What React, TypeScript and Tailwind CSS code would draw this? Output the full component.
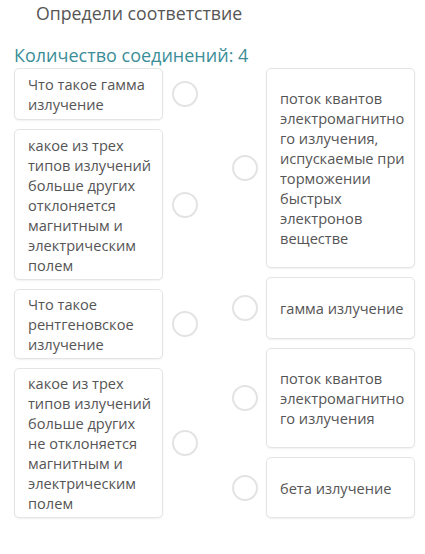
const leftItems = [
  { h: "h-[52px]", text: "Что такое гамма излучение" },
  { h: "h-[151px]", text: "какое из трех типов излучений больше других отклоняется магнитным и электрическим полем" },
  { h: "h-[70px]", text: "Что такое рентгеновское излучение" },
  { h: "h-[150px]", text: "какое из трех типов излучений больше других не отклоняется магнитным и электрическим полем" },
];

const rightItems = [
  { h: "h-[200px]", text: "поток квантов электромагнитного излучения, испускаемые при торможении быстрых электронов веществе" },
  { h: "h-[62px]", text: "гамма излучение" },
  { h: "h-[100px]", text: "поток квантов электромагнитного излучения" },
  { h: "h-[61px]", text: "бета излучение" },
];

function Circle() {
  return <span className="block h-[26px] w-[26px] shrink-0 rounded-full border-2 border-[#e3e3e3] bg-white" />;
}

function Card({ h, text }: { h: string; text: string }) {
  return (
    <div
      className={`flex w-[149px] items-center rounded-[5px] border border-[#e4e4e4] bg-white pl-[13px] pr-[8px] text-[14.6px] leading-[20px] text-[#555] shadow-[0_1px_2px_rgba(0,0,0,0.06)] ${h}`}
    >
      <span className="min-w-0 break-words">{text}</span>
    </div>
  );
}

export default function App() {
  return (
    <div className="min-h-[554px] w-[425px] bg-white font-['Open_Sans',sans-serif]">
      <h1 className="pl-[36px] pt-[1px] text-[17.7px] leading-[24px] text-[#555]">Определи соответствие</h1>
      <div className="mt-[18px] pl-[14px] text-[18px] leading-[24px] text-[#3b8e97]">Количество соединений: 4</div>
      <div className="mt-[1px] flex justify-between px-[10px] pl-[14px]">
        <div className="flex flex-col gap-[9px]">
          {leftItems.map((it, i) => (
            <div key={i} className="flex items-center gap-[9px]">
              <Card h={it.h} text={it.text} />
              <Circle />
            </div>
          ))}
        </div>
        <div className="flex flex-col gap-[9px]">
          {rightItems.map((it, i) => (
            <div key={i} className="flex items-center gap-[8px]">
              <Circle />
              <Card h={it.h} text={it.text} />
            </div>
          ))}
        </div>
      </div>
    </div>
  );
}
